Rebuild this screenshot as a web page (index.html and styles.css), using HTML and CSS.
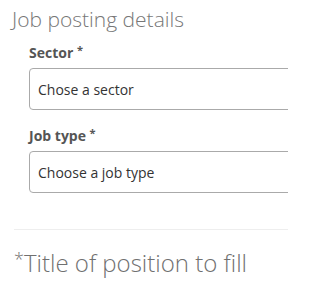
FILE: index.html
```html
<!DOCTYPE html>
<html>
<head>
<meta charset="utf-8">
<link rel="stylesheet" href="styles.css">
</head>
<body>
<div class="page">
  <h2 class="section-title">Job posting details</h2>
  <div class="fields">
    <div class="field">
      <label class="label">Sector <sup class="req">*</sup></label>
      <div class="select">Chose a sector</div>
    </div>
    <div class="field">
      <label class="label">Job type <sup class="req">*</sup></label>
      <div class="select">Choose a job type</div>
    </div>
  </div>
  <hr class="divider">
  <h2 class="title2"><sup class="req-big">*</sup>Title of position to fill</h2>
</div>
</body>
</html>
```
FILE: styles.css
```css
html, body {
  margin: 0;
  padding: 0;
  background: #fff;
  overflow: hidden;
}
body {
  font-family: "Open Sans", "Liberation Sans", sans-serif;
  width: 288px;
  height: 288px;
}
.page {
  padding: 0 0 0 12px;
}
.section-title {
  margin: 0;
  padding-top: 5px;
  font-weight: 300;
  font-size: 21px;
  line-height: 28px;
  color: #777;
}
.fields {
  display: flex;
  flex-direction: column;
  gap: 16px;
  padding-left: 17px;
  padding-top: 10px;
}
.label {
  display: block;
  font-weight: 700;
  font-size: 14px;
  line-height: 20px;
  color: #555;
  margin-bottom: 5px;
}
.req {
  font-size: 11px;
  vertical-align: 4px;
  line-height: 0;
}
.select {
  box-sizing: border-box;
  width: 300px;
  height: 42px;
  border: 1px solid #aaa;
  border-radius: 4px;
  padding: 0 8px;
  display: flex;
  align-items: center;
  font-size: 14px;
  color: #333;
}
.divider {
  margin: 36px 0 0 2px;
  border: 0;
  border-top: 1px solid #eee;
}
.title2 {
  margin: 0;
  padding-top: 17px;
  padding-left: 2px;
  font-weight: 300;
  font-size: 24px;
  line-height: 32px;
  color: #707070;
}
.req-big {
  font-size: 18px;
  vertical-align: 6px;
  line-height: 0;
}
```
